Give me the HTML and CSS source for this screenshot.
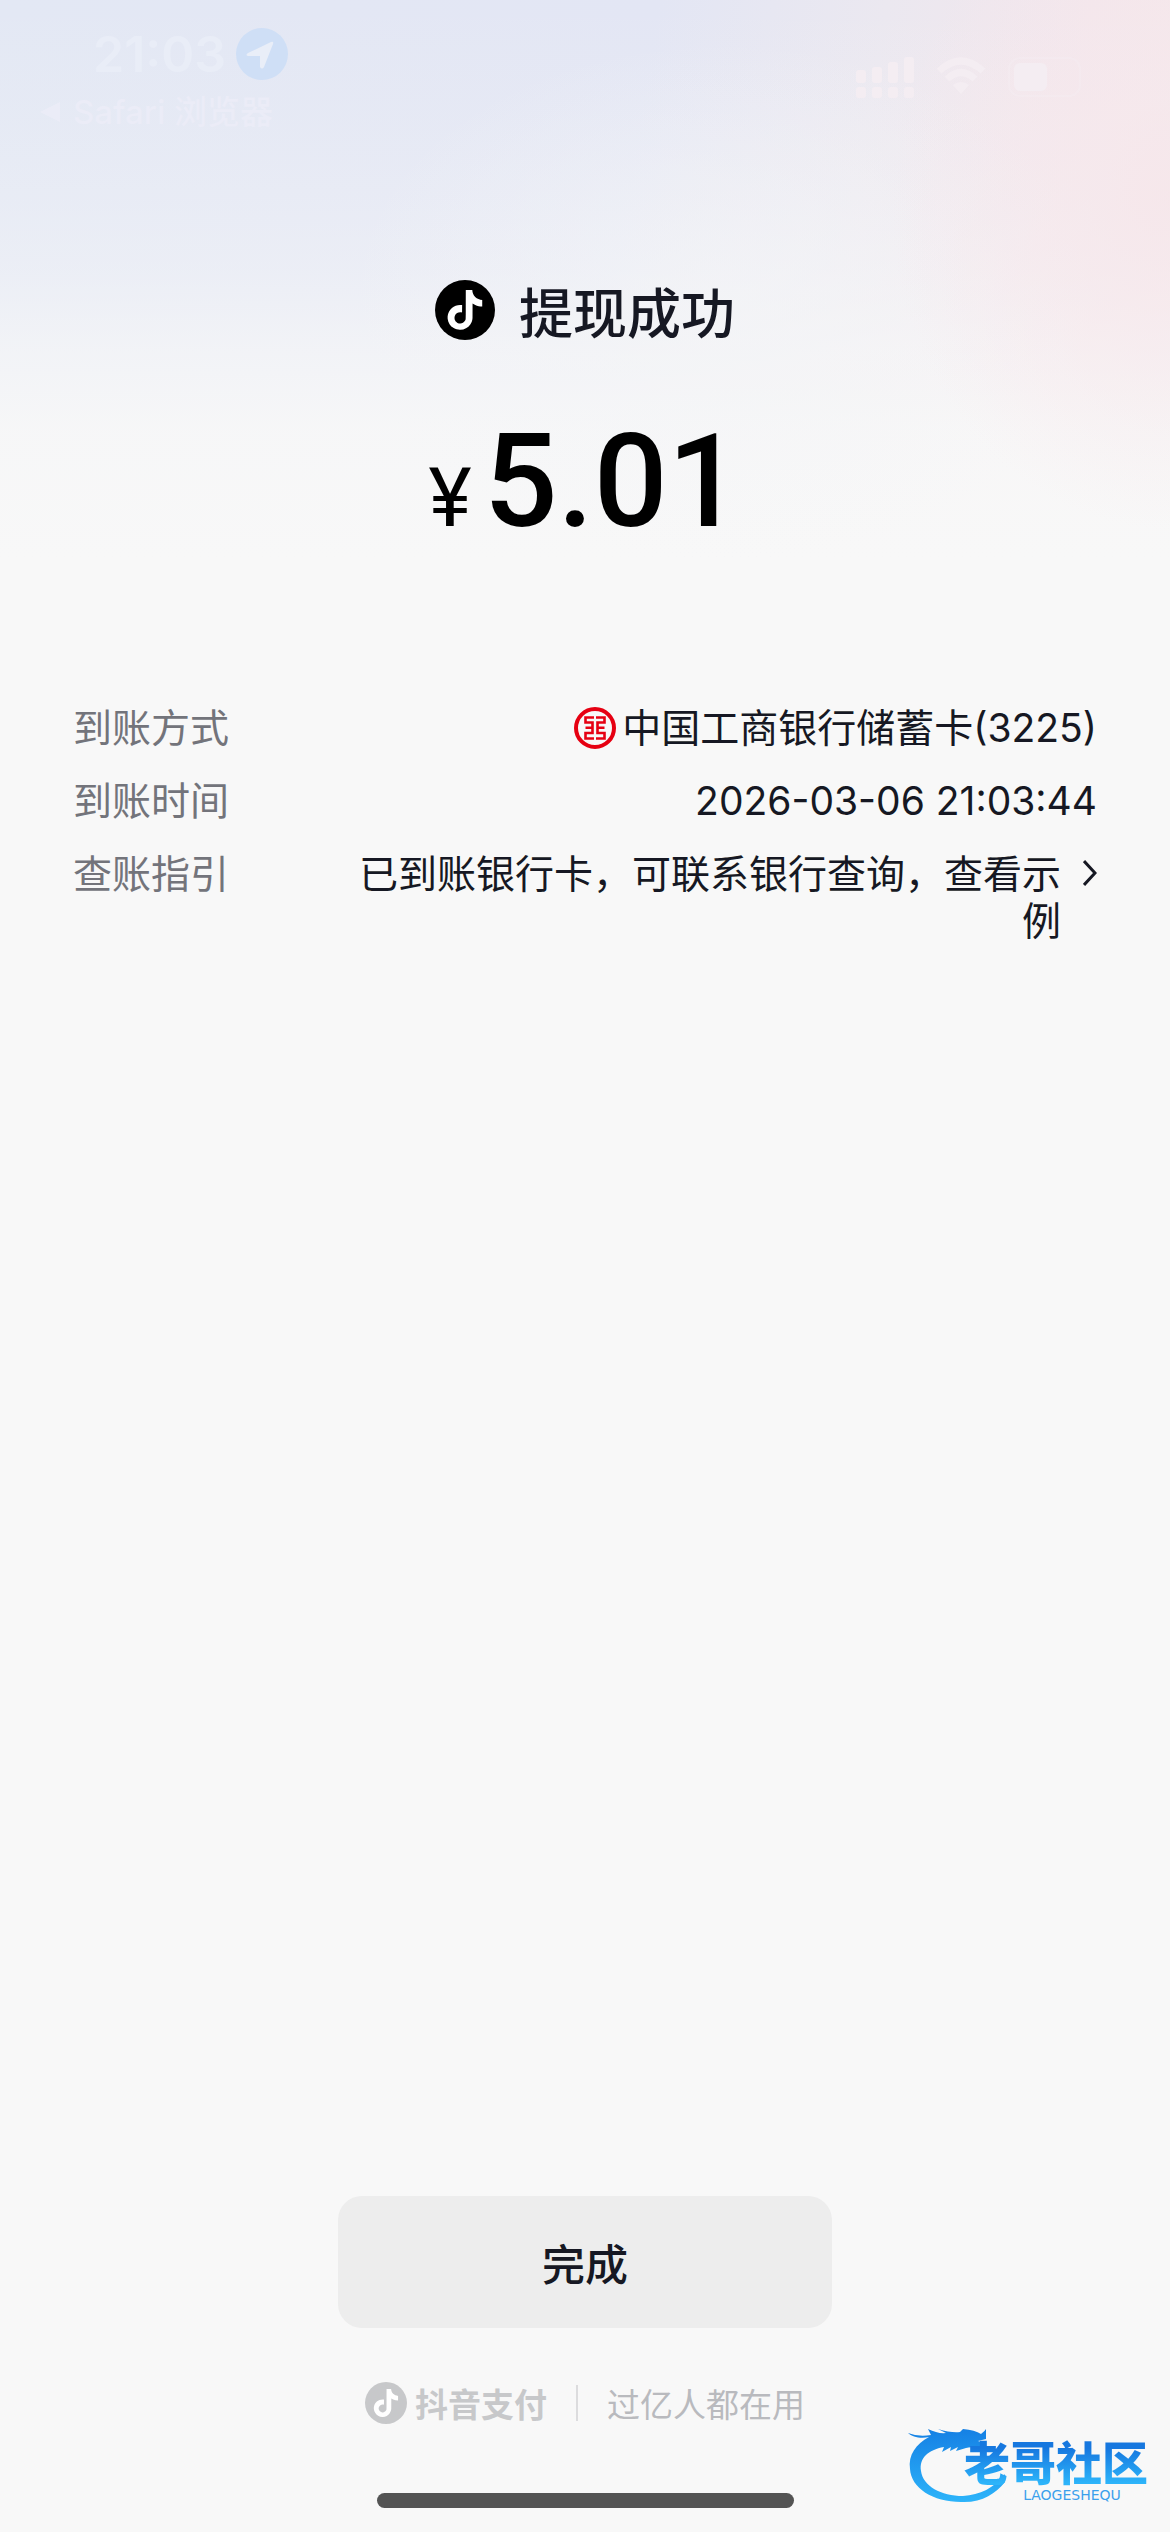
FILE: index.html
```html
<!DOCTYPE html>
<html lang="zh-CN">
<head>
<meta charset="utf-8">
<meta name="viewport" content="width=device-width, initial-scale=1">
<title>提现成功</title>
<link rel="stylesheet" href="styles.css">
</head>
<body>
<svg class="defs" width="0" height="0" aria-hidden="true">
  <symbol id="note" viewBox="0 0 60 60">
    <path transform="translate(10 10) scale(1.66)" fill="#fff" d="M12.525.02c1.31-.02 2.61-.01 3.91-.02.08 1.53.63 3.09 1.75 4.17 1.12 1.11 2.7 1.62 4.24 1.79v4.03c-1.44-.05-2.89-.35-4.2-.97-.57-.26-1.1-.59-1.62-.93-.01 2.92.01 5.84-.02 8.75-.08 1.4-.54 2.79-1.35 3.94-1.31 1.92-3.58 3.17-5.91 3.21-1.43.08-2.86-.31-4.08-1.03-2.02-1.19-3.44-3.37-3.65-5.71-.02-.5-.03-1-.01-1.49.18-1.9 1.12-3.72 2.58-4.96 1.66-1.44 3.98-2.13 6.15-1.72.02 1.48-.04 2.96-.04 4.44-.99-.32-2.15-.23-3.02.37-.63.41-1.11 1.04-1.36 1.75-.21.51-.15 1.07-.14 1.61.24 1.64 1.82 3.02 3.5 2.87 1.12-.01 2.19-.66 2.77-1.61.19-.33.4-.67.41-1.06.1-1.79.06-3.57.07-5.36.01-4.03-.01-8.05.02-12.07z"/>
  </symbol>
</svg>

<div class="status">
  <div class="status-left">
    <div class="clock">
      <span class="time">21:03</span>
      <svg class="location" viewBox="0 0 52 52" aria-hidden="true">
        <circle cx="26" cy="26" r="26" fill="#cfdff6"/>
        <path d="M12 25 35 14q3-1 2 2L28 39q-2 3-4 0V28H12q-3-1 0-3z" fill="#e9eef8"/>
      </svg>
    </div>
    <a class="back" href="#"><svg class="back-arrow" viewBox="0 0 22 22" aria-hidden="true"><path d="M1 11 21 1v20z" fill="currentColor"/></svg>Safari 浏览器</a>
  </div>
  <div class="status-right">
    <svg class="signal" viewBox="0 0 58 42" aria-hidden="true" fill="currentColor">
      <rect x="0" y="13" width="10" height="13" rx="3"/><rect x="16" y="10" width="10" height="16" rx="3"/>
      <rect x="32" y="5" width="10" height="21" rx="3"/><rect x="48" y="0" width="10" height="26" rx="3"/>
      <rect x="0" y="30" width="10" height="11" rx="3"/><rect x="16" y="30" width="10" height="11" rx="3"/>
      <rect x="32" y="30" width="10" height="11" rx="3"/><rect x="48" y="30" width="10" height="11" rx="3"/>
    </svg>
    <svg class="wifi" viewBox="0 0 50 38" aria-hidden="true">
      <g fill="none" stroke="currentColor" stroke-width="7"><path d="M3 14Q25-6 47 14"/><path d="M11 22Q25 9 39 22"/></g>
      <path d="M17 28Q25 22 33 28L25 37z" fill="currentColor"/>
    </svg>
    <svg class="battery" viewBox="0 0 78 40" aria-hidden="true">
      <rect x="1" y="1" width="71" height="38" rx="11" fill="none" stroke="currentColor" stroke-width="2" opacity=".4"/>
      <rect x="6" y="6" width="33" height="28" rx="6" fill="currentColor"/>
    </svg>
  </div>
</div>

<main>
  <h1 class="result"><svg class="result-logo" viewBox="0 0 60 60" aria-hidden="true"><circle cx="30" cy="30" r="30"/><use href="#note"/></svg>提现成功</h1>
  <p class="amount"><span class="currency">¥</span>5.01</p>

  <dl class="details">
    <div class="row">
      <dt>到账方式</dt>
      <dd class="bank"><svg class="bank-logo" viewBox="0 0 42 42" aria-hidden="true">
        <g fill="none" stroke="#e60012">
          <circle cx="21" cy="21" r="19" stroke-width="4"/>
          <path stroke-width="2.6" d="M20 10.5h-8.500v5h7V26h-7v5.500H20M11.500 20.800h7M22 10.500h8.500v5h-7V26h7v5.500H22M30.500 20.800h-7"/>
        </g></svg>中国工商银行储蓄卡(3225)</dd>
    </div>
    <div class="row">
      <dt>到账时间</dt>
      <dd>2026-03-06 21:03:44</dd>
    </div>
    <div class="row">
      <dt>查账指引</dt>
      <dd><a class="guide" href="#"><span class="guide-text">已到账银行卡，可联系银行查询，查看示例</span><svg class="chevron" viewBox="0 0 14 26" aria-hidden="true"><path d="M1 1l11 12L1 25" fill="none" stroke="currentColor" stroke-width="3"/></svg></a></dd>
    </div>
  </dl>
</main>

<footer>
  <button class="done" type="button">完成</button>
  <div class="brand">
    <svg class="brand-logo" viewBox="0 0 60 60" aria-hidden="true"><circle cx="30" cy="30" r="30" fill="#c7c8ca"/><use href="#note"/></svg>
    <strong class="brand-name">抖音支付</strong>
    <span class="divider"></span>
    <span class="slogan">过亿人都在用</span>
  </div>
  <div class="home-bar"></div>
</footer>

<div class="watermark">
  <svg class="dragon" viewBox="0 0 100 82" aria-hidden="true">
    <defs><linearGradient id="blue" x1="0" y1="0" x2="0" y2="1"><stop offset="0" stop-color="#1580e4"/><stop offset="1" stop-color="#2db4fa"/></linearGradient></defs>
    <path fill="url(#blue)" d="M0 11q10 4 23 2l-3-6q10 5 18 4l-8-4q13 4 22 3L55 7q12 1 18 5 4-3 5-5v10l-8 2 6 2-2 6q-10-3-16-1l-10 3 2-4-8 4 1-4-9 5 2-5C20 28 11 36 13 49c2 15 20 25 42 25 17-1 31-8 42-22v8C87 72 74 81 53 80 25 80 3 66 2 47 0 33 8 22 21 15 13 17 4 15 0 11z"/>
  </svg>
  <div class="watermark-text">
    <span class="watermark-name">老哥社区</span>
    <span class="watermark-latin">LAOGESHEQU</span>
  </div>
</div>
</body>
</html>
```
FILE: styles.css
```css
* { box-sizing: border-box; margin: 0; padding: 0; }

body {
  position: relative;
  display: flex;
  flex-direction: column;
  min-height: 100vh;
  color: #161823;
  font-family: Inter, "Noto Sans CJK SC", sans-serif;
  font-size: 39px;
  background:
    radial-gradient(ellipse 280px 330px at 100% 200px, rgba(246, 230, 234, .8) 0, rgba(246, 232, 236, .7) 30%, rgba(247, 240, 242, 0) 100%) no-repeat,
    radial-gradient(ellipse 380px 260px at 62% 300px, rgba(244, 245, 247, .7) 0, rgba(244, 245, 247, 0) 100%) no-repeat,
    linear-gradient(to bottom, rgba(248, 248, 248, 0) 0, rgba(248, 248, 248, .1) 100px, rgba(248, 248, 248, .25) 200px, rgba(248, 248, 248, .4) 270px, rgba(248, 248, 248, .7) 350px, rgba(248, 248, 248, .92) 430px, #f8f8f8 560px) no-repeat,
    linear-gradient(100deg, #e3e8f4 0, #e3e6f4 52%, #ebe8f0 70%, #f3e6ec 86%, #f5e7ea 100%) no-repeat,
    #f8f8f8;
  background-size: 100% 560px, 100% 560px, 100% 560px, 100% 560px, auto;
}

a { color: inherit; text-decoration: none; }
svg { display: block; flex: none; }
.defs { position: absolute; }

.status {
  display: flex;
  justify-content: space-between;
  height: 260px;
  padding: 28px 84px 0 39px;
}
.clock {
  display: flex;
  align-items: center;
  gap: 10px;
  height: 52px;
  padding-left: 54px;
}
.time { color: #e9edf7; font-size: 50px; font-weight: 600; }
.location { width: 52px; height: 52px; }
.back {
  display: flex;
  align-items: center;
  gap: 12px;
  margin-top: 8px;
  color: #ebecf7;
  font-size: 33px;
  font-weight: 500;
  line-height: 48px;
}
.back-arrow { width: 22px; height: 22px; }
.status-right {
  display: flex;
  align-items: flex-start;
  gap: 22px;
  padding-top: 29px;
  color: #f4edf2;
}
.signal { width: 58px; height: 42px; }
.wifi { width: 50px; height: 38px; }
.battery { width: 78px; height: 40px; }

main { flex: 1; }

.result {
  display: flex;
  justify-content: center;
  align-items: center;
  gap: 24px;
  height: 100px;
  font-size: 54px;
  font-weight: 500;
}
.result-logo { width: 60px; height: 60px; }

.amount {
  display: flex;
  justify-content: center;
  align-items: baseline;
  gap: 12px;
  margin-top: 44px;
  color: #000;
  font-family: Roboto, sans-serif;
  font-size: 130px;
  font-weight: 500;
  line-height: 156px;
}
.currency { font-size: 82px; font-weight: 400; }

.details {
  display: flex;
  flex-direction: column;
  gap: 26px;
  margin-top: 128px;
  padding: 0 73px;
  line-height: 47px;
}
.row { display: flex; justify-content: space-between; }
dt { color: #73747b; }
dd { text-align: right; }
.bank { display: flex; align-items: center; gap: 6px; }
.bank-logo { width: 42px; height: 42px; }
.guide { display: flex; align-items: flex-start; gap: 22px; }
.guide-text { max-width: 704px; }
.chevron { width: 14px; height: 26px; margin-top: 10px; }

footer {
  display: flex;
  flex-direction: column;
  align-items: center;
  padding-bottom: 24px;
}
.done {
  width: 42.3%;
  height: 132px;
  border: 0;
  border-radius: 24px;
  background: #ededed;
  color: #161823;
  font: inherit;
  font-size: 43px;
  font-weight: 500;
}
.brand {
  display: flex;
  align-items: center;
  height: 42px;
  margin: 54px 0 69px;
  font-size: 33px;
}
.brand-logo { width: 42px; height: 42px; margin-right: 8px; }
.brand-name { color: #c7c8ca; font-weight: 700; }
.divider { width: 2px; height: 36px; margin: 0 29px; background: #dcdcde; }
.slogan { color: #b9babe; }
.home-bar { width: 417px; height: 15px; border-radius: 8px; background: #545454; }

.watermark {
  position: absolute;
  right: 22px;
  bottom: 28px;
  width: 240px;
}
.dragon { width: 100px; height: 82px; }
.watermark-text {
  position: absolute;
  top: 16px;
  right: 0;
  display: flex;
  flex-direction: column;
  align-items: center;
}
.watermark-name {
  color: transparent;
  background: linear-gradient(#1677df 20%, #2db4fa 90%);
  background-clip: text;
  font-size: 46px;
  font-weight: 900;
  line-height: 50px;
}
.watermark-latin {
  padding-left: 32px;
  color: #3ba0ec;
  font-family: "DejaVu Sans", sans-serif;
  font-size: 14px;
  line-height: 14px;
}
```
